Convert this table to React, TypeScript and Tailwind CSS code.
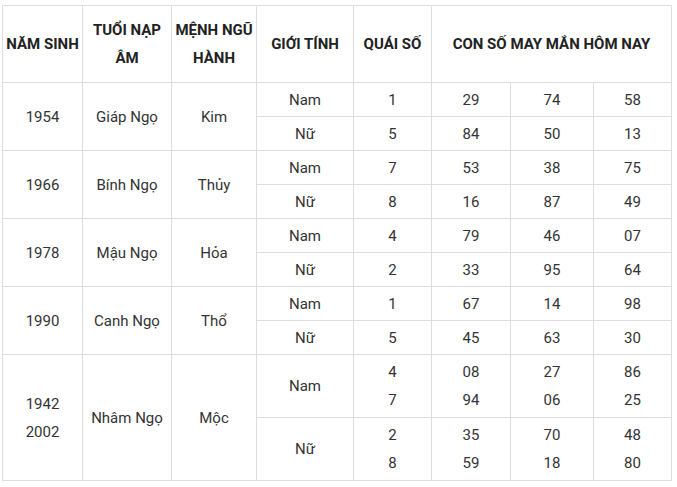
const groups = [
  {
    year: ['1954'],
    tuoi: 'Giáp Ngọ',
    menh: 'Kim',
    rows: [
      { gt: 'Nam', qs: ['1'], nums: [['29'], ['74'], ['58']] },
      { gt: 'Nữ', qs: ['5'], nums: [['84'], ['50'], ['13']] },
    ],
  },
  {
    year: ['1966'],
    tuoi: 'Bính Ngọ',
    menh: 'Thủy',
    rows: [
      { gt: 'Nam', qs: ['7'], nums: [['53'], ['38'], ['75']] },
      { gt: 'Nữ', qs: ['8'], nums: [['16'], ['87'], ['49']] },
    ],
  },
  {
    year: ['1978'],
    tuoi: 'Mậu Ngọ',
    menh: 'Hỏa',
    rows: [
      { gt: 'Nam', qs: ['4'], nums: [['79'], ['46'], ['07']] },
      { gt: 'Nữ', qs: ['2'], nums: [['33'], ['95'], ['64']] },
    ],
  },
  {
    year: ['1990'],
    tuoi: 'Canh Ngọ',
    menh: 'Thổ',
    rows: [
      { gt: 'Nam', qs: ['1'], nums: [['67'], ['14'], ['98']] },
      { gt: 'Nữ', qs: ['5'], nums: [['45'], ['63'], ['30']] },
    ],
  },
  {
    year: ['1942', '2002'],
    tuoi: 'Nhâm Ngọ',
    menh: 'Mộc',
    rows: [
      { gt: 'Nam', qs: ['4', '7'], nums: [['08', '94'], ['27', '06'], ['86', '25']] },
      { gt: 'Nữ', qs: ['2', '8'], nums: [['35', '59'], ['70', '18'], ['48', '80']] },
    ],
  },
]

const cell = 'border border-[#dddddd] text-center align-middle p-0'

function Lines({ items }: { items: string[] }) {
  return (
    <>
      {items.map((t, i) => (
        <div key={i}>{t}</div>
      ))}
    </>
  )
}

export default function App() {
  return (
    <div className="bg-white min-h-screen pt-[5px] pl-[2px] font-['Roboto',sans-serif] text-[15px] leading-[28px] text-[#333333]">
      <table className="border-collapse table-fixed w-[669px]">
        <colgroup>
          <col className="w-[80px]" />
          <col className="w-[89px]" />
          <col className="w-[85px]" />
          <col className="w-[97px]" />
          <col className="w-[78px]" />
          <col className="w-[79px]" />
          <col className="w-[83px]" />
          <col className="w-[78px]" />
        </colgroup>
        <thead>
          <tr className="h-[77px] font-bold text-[#222222]">
            <th className={cell}>NĂM SINH</th>
            <th className={cell}>TUỔI NẠP<br />ÂM</th>
            <th className={cell}>MỆNH NGŨ<br />HÀNH</th>
            <th className={cell}>GIỚI TÍNH</th>
            <th className={cell}>QUÁI SỐ</th>
            <th className={cell} colSpan={3}>CON SỐ MAY MẮN HÔM NAY</th>
          </tr>
        </thead>
        <tbody>
          {groups.map((g, gi) =>
            g.rows.map((r, ri) => (
              <tr key={`${gi}-${ri}`} className={g.year.length > 1 ? 'h-[63px]' : 'h-[34px]'}>
                {ri === 0 && (
                  <>
                    <td className={cell} rowSpan={2}><Lines items={g.year} /></td>
                    <td className={cell} rowSpan={2}>{g.tuoi}</td>
                    <td className={cell} rowSpan={2}>{g.menh}</td>
                  </>
                )}
                <td className={cell}>{r.gt}</td>
                <td className={cell}><Lines items={r.qs} /></td>
                {r.nums.map((n, ni) => (
                  <td key={ni} className={cell}><Lines items={n} /></td>
                ))}
              </tr>
            ))
          )}
        </tbody>
      </table>
    </div>
  )
}
